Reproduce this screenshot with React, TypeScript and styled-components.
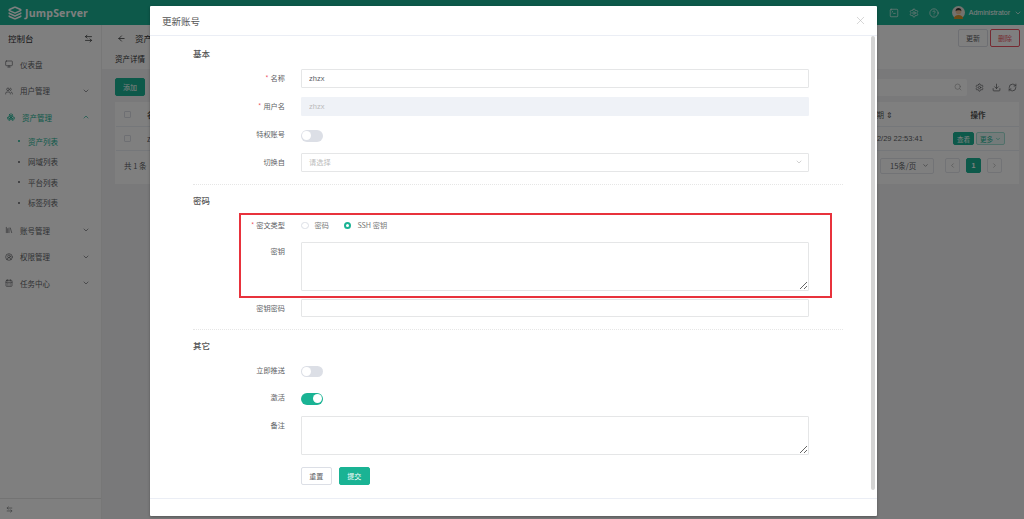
import React from 'react'
import styled, { createGlobalStyle } from 'styled-components'
import {
    ArrowLeft,
    ArrowLeftRight,
    Boxes,
    CalendarDays,
    ChevronDown,
    ChevronLeft,
    ChevronRight,
    ChevronUp,
    CircleHelp,
    CircleUserRound,
    Download,
    Layers,
    Library,
    Monitor,
    RefreshCw,
    Search,
    Settings,
    SquareTerminal,
    Users,
    X,
} from 'lucide-react'

const GlobalStyle = createGlobalStyle`
    html, body {
        margin: 0;
        padding: 0;
        height: 100%;
        overflow: hidden;
    }
    body {
        font-family: "Noto Sans CJK SC", "Noto Sans", sans-serif;
        color: #606266;
    }
    * { box-sizing: border-box; }
`

const Page = styled.div`
    position: relative;
    width: 1024px;
    height: 519px;
    overflow: hidden;
    display: flex;
    flex-direction: column;
    background: #f3f3f4;
`

const TopBar = styled.header`
    height: 25px;
    flex: none;
    background: #1ab394;
    display: flex;
    align-items: center;
    padding: 0 2px 0 8px;
    color: #fff;
`

const Logo = styled.div`
    display: flex;
    align-items: center;
    gap: 3px;
    font-family: "Open Sans", sans-serif;
    font-weight: 700;
    font-size: 10.5px;
    letter-spacing: 0.2px;
`

const TopActions = styled.div`
    margin-left: auto;
    display: flex;
    align-items: center;
    gap: 10px;
    font-family: "Liberation Sans", sans-serif;
    font-size: 7px;

    svg { flex: none; }
`

const User = styled.div`
    display: flex;
    align-items: center;
    gap: 4px;
    margin-left: 2.5px;
`

const Body = styled.div`
    flex: 1;
    display: flex;
    min-height: 0;
`

const Side = styled.aside`
    width: 102px;
    flex: none;
    background: #fff;
    border-right: 1px solid #eee;
    display: flex;
    flex-direction: column;
`

const SideHead = styled.div`
    height: 26px;
    display: flex;
    align-items: center;
    justify-content: space-between;
    padding: 0 8px;
    font-size: 8.5px;
    color: #303133;
`

const NavItem = styled.div<{ $active?: boolean }>`
    height: 26.6px;
    display: flex;
    align-items: center;
    gap: 7px;
    padding: 0 11px 0 ${p => (p.$active ? '7px' : '5px')};
    font-size: 7.5px;
    color: ${p => (p.$active ? '#1ab394' : '#606266')};

    span { flex: 1; }
`

const SubItem = styled.div<{ $active?: boolean }>`
    height: 20.5px;
    display: flex;
    align-items: center;
    gap: 8px;
    padding-left: 18px;
    font-size: 7.5px;
    color: ${p => (p.$active ? '#1ab394' : '#606266')};

    &::before {
        content: '';
        width: 2px;
        height: 2px;
        border-radius: 50%;
        background: currentColor;
    }
`

const SubList = styled.div`
    padding-bottom: 4px;
`

const SideFoot = styled.div`
    margin-top: auto;
    height: 21px;
    border-top: 1px solid #e7e7e7;
    display: flex;
    align-items: center;
    padding-left: 6px;
`

const Main = styled.main`
    flex: 1;
    min-width: 0;
    display: flex;
    flex-direction: column;
`

const PageHead = styled.div`
    background: #fff;
    height: 44px;
    flex: none;
`

const TitleRow = styled.div`
    height: 26px;
    display: flex;
    align-items: center;
    padding: 0 4px 0 15px;
    gap: 9px;
    font-size: 8.5px;
    color: #303133;
`

const HeadActions = styled.div`
    margin-left: auto;
    display: flex;
    gap: 2px;
`

const SmallButton = styled.button<{ $tone?: 'danger' | 'primary' | 'plain' | 'light' }>`
    height: 18px;
    min-width: 30px;
    padding: 0 5px;
    border-radius: 2px;
    font: 7px "Noto Sans CJK SC", sans-serif;
    white-space: nowrap;
    display: inline-flex;
    align-items: center;
    justify-content: center;
    gap: 2px;
    border: 1px solid
        ${p => (p.$tone === 'danger' ? '#ed5565' : p.$tone === 'primary' ? '#1ab394' : p.$tone === 'light' ? '#a3e1d4' : '#dcdfe6')};
    background: ${p => (p.$tone === 'primary' ? '#1ab394' : p.$tone === 'light' ? '#e8f7f4' : '#fff')};
    color: ${p => (p.$tone === 'danger' ? '#ed5565' : p.$tone === 'primary' ? '#fff' : p.$tone === 'light' ? '#1ab394' : '#606266')};
`

const Tabs = styled.div`
    height: 18px;
    line-height: 16px;
    padding-left: 13px;
    font-size: 7.5px;
    color: #303133;
`

const Content = styled.div`
    padding: 9px 5px 0 13px;
`

const Toolbar = styled.div`
    height: 18px;
    display: flex;
    align-items: center;
    padding-right: 2px;
    gap: 7.5px;
    color: #606266;
`

const SearchBox = styled.div`
    margin-left: auto;
    margin-right: 1px;
    width: 120px;
    height: 17px;
    background: #fff;
    border-radius: 2px;
    display: flex;
    align-items: center;
    justify-content: flex-end;
    padding-right: 5px;
    color: #aaa;
`

const Table = styled.div`
    margin-top: 6px;
    background: #fff;
    height: 82px;
    padding-left: 1px;
    display: flex;
    flex-direction: column;
    font-size: 7.5px;
`

const TableRow = styled.div<{ $head?: boolean }>`
    height: ${p => (p.$head ? '25px' : '24px')};
    display: flex;
    align-items: center;
    padding: 0 4px 0 8px;
    border-bottom: 1px solid #ebeef5;
    font-weight: ${p => (p.$head ? 600 : 400)};
    color: ${p => (p.$head ? '#555' : '#606266')};
`

const CheckBox = styled.span`
    width: 7px;
    height: 7px;
    border: 1px solid #dcdfe6;
    border-radius: 1px;
    margin-right: 16px;
`

const DateCell = styled.span`
    margin-left: auto;
    font-family: "Liberation Sans", "Noto Sans CJK SC", sans-serif;
    font-weight: 400;
    width: 99px;
`

const ActionCell = styled.span<{ $head?: boolean }>`
    width: 62px;
    display: flex;
    gap: 2px;
    justify-content: ${p => (p.$head ? 'center' : 'flex-start')};
    padding-right: ${p => (p.$head ? '12px' : '0')};

    ${SmallButton} {
        height: 13px;
        min-width: 19px;
        padding: 0 3px;
        font-size: 6.5px;
    }
`

const Pager = styled.div`
    flex: 1;
    display: flex;
    align-items: center;
    padding: 0 17px 4px 8px;
    gap: 6px;

    > span:first-child { margin-right: auto; }
`

const PageSize = styled.span`
    width: 54px;
    height: 16px;
    border: 1px solid #e4e7ed;
    border-radius: 2px;
    display: flex;
    align-items: center;
    justify-content: space-between;
    padding: 0 4px 0 9px;
    margin-right: 5px;
`

const PagerBtn = styled.span<{ $on?: boolean }>`
    width: 15px;
    height: 15px;
    border: 1px solid ${p => (p.$on ? '#1ab394' : '#e4e7ed')};
    background: ${p => (p.$on ? '#1ab394' : '#fff')};
    color: ${p => (p.$on ? '#fff' : '#999')};
    border-radius: 2px;
    display: flex;
    align-items: center;
    justify-content: center;
    font: 700 7px "Liberation Sans", sans-serif;
`

const Mask = styled.div`
    position: absolute;
    inset: 0;
    background: rgba(0, 0, 0, 0.5);
`

const Dialog = styled.div`
    position: absolute;
    left: 150px;
    top: 6px;
    width: 727px;
    height: 510px;
    background: #fff;
    border-radius: 1px;
    display: flex;
    flex-direction: column;
    box-shadow: 0 1px 3px rgba(0, 0, 0, 0.3);
`

const DialogHead = styled.div`
    height: 30px;
    flex: none;
    display: flex;
    align-items: center;
    justify-content: space-between;
    padding: 0 10.5px 0 12px;
    font-size: 9.5px;
    border-bottom: 1px solid #ebeef5;
    color: #555;
`

const DialogBody = styled.div`
    flex: 1;
    padding: 8px 34px 0 43px;
    min-height: 0;
`

const SectionTitle = styled.h3`
    margin: 0 0 7px;
    height: 18px;
    line-height: 18px;
    font-size: 8.5px;
    font-weight: 500;
    color: #555;
`

const Divider = styled.hr<{ $above: number }>`
    margin: ${p => p.$above}px 0 6px;
    border: 0;
    border-top: 1px dotted #e6e6e6;
`

const Row = styled.div`
    display: grid;
    grid-template-columns: 92px 508px;
    column-gap: 16px;
    align-items: start;
`

const Section = styled.section<{ $gap: number }>`
    ${Row} + ${Row} {
        margin-top: ${p => p.$gap}px;
    }
`

const Label = styled.label<{ $required?: boolean }>`
    height: 18.5px;
    display: flex;
    align-items: center;
    justify-content: flex-end;
    font-size: 7.2px;
    color: #606266;

    ${p =>
        p.$required &&
        `&::before {
            content: '*';
            color: #ed5565;
            margin-right: 2px;
        }`}
`

const Input = styled.input`
    display: block;
    width: 100%;
    height: 18.5px;
    padding: 0 7px;
    border: 1px solid #e5e6e7;
    border-radius: 1px;
    font: 7.5px "Liberation Sans", "Noto Sans CJK SC", sans-serif;
    color: #606266;
    background: #fff;
    outline: none;

    &:disabled {
        background: #eff2f7;
        border-color: #eff2f7;
        color: #bbb;
    }

    &::placeholder { color: #bbb; }
`

const SelectBox = styled.div`
    height: 18.5px;
    border: 1px solid #e5e6e7;
    border-radius: 1px;
    padding: 0 5px 0 7px;
    display: flex;
    align-items: center;
    justify-content: space-between;
    font-size: 7.2px;
    color: #bbb;
`

const TextArea = styled.textarea<{ $h: number }>`
    display: block;
    width: 100%;
    height: ${p => p.$h}px;
    border: 1px solid #e5e6e7;
    border-radius: 1px;
    outline: none;
    resize: vertical;
`

const Switch = styled.span<{ $on?: boolean }>`
    margin-top: 5px;
    display: block;
    position: relative;
    width: 22px;
    height: 11.5px;
    border-radius: 6px;
    background: ${p => (p.$on ? '#1ab394' : '#dcdfe6')};

    &::after {
        content: '';
        position: absolute;
        top: 1.2px;
        left: ${p => (p.$on ? '12px' : '1.2px')};
        width: 9px;
        height: 9px;
        border-radius: 50%;
        background: #fff;
    }
`

const RadioGroup = styled.div`
    height: 18.5px;
    display: flex;
    align-items: center;
    gap: 15px;
    font-size: 7.2px;
    color: #777;
`

const RadioItem = styled.span`
    display: flex;
    align-items: center;
    gap: 6px;
`

const RadioDot = styled.span<{ $on?: boolean }>`
    width: 7.5px;
    height: 7.5px;
    border-radius: 50%;
    border: ${p => (p.$on ? '2.5px solid #1ab394' : '1px solid #dcdfe6')};
    background: #fff;
`

const FormButtons = styled.div`
    grid-column: 2;
    margin-top: 3px;
    display: flex;
    gap: 7.5px;

    ${SmallButton} {
        width: 30.5px;
        min-width: 0;
        height: 18px;
    }
`

const DialogFoot = styled.div`
    height: 18px;
    flex: none;
    border-top: 1px solid #ebeef5;
`

const ScrollThumb = styled.div`
    position: absolute;
    right: 2px;
    top: 30px;
    width: 4px;
    height: 454px;
    background: #d4d4d4;
    border-radius: 2px;
`

const Callout = styled.div`
    position: absolute;
    left: 89px;
    top: 207px;
    width: 592.5px;
    height: 84.5px;
    border: 2px solid #e8323c;
    pointer-events: none;
`

const noop = () => undefined

const AvatarIcon = () => (
    <svg width="13" height="13" viewBox="0 0 13 13">
        <circle cx="6.5" cy="6.5" r="6.5" fill="#e9e4dc" />
        <path d="M2 13c0-3 2-4 4.500-4s4.500 1 4.500 4z" fill="#d9942b" />
        <circle cx="6.500" cy="5.500" r="2.800" fill="#eec39a" />
        <path d="M3.600 5.200C3.500 2.800 5 2 6.500 2s3 .8 2.900 3.200C8.500 4 5 4 3.600 5.200z" fill="#3b3230" />
    </svg>
)

export default function App() {
    return (
        <Page>
            <GlobalStyle />
            <TopBar>
                <Logo>
                    <Layers size={14} strokeWidth={2.6} />
                    JumpServer
                </Logo>
                <TopActions>
                    <SquareTerminal size={10} strokeWidth={1.5} />
                    <Settings size={10} strokeWidth={1.5} />
                    <CircleHelp size={10} strokeWidth={1.5} />
                    <User>
                        <AvatarIcon />
                        Administrator
                        <ChevronDown size={8} />
                    </User>
                </TopActions>
            </TopBar>
            <Body>
                <Side>
                    <SideHead>
                        控制台
                        <ArrowLeftRight size={9} />
                    </SideHead>
                    <NavItem>
                        <Monitor size={8} />
                        <span>仪表盘</span>
                    </NavItem>
                    <NavItem>
                        <Users size={8} />
                        <span>用户管理</span>
                        <ChevronDown size={8} />
                    </NavItem>
                    <NavItem $active>
                        <Boxes size={8} />
                        <span>资产管理</span>
                        <ChevronUp size={8} />
                    </NavItem>
                    <SubList>
                        <SubItem $active>资产列表</SubItem>
                        <SubItem>网域列表</SubItem>
                        <SubItem>平台列表</SubItem>
                        <SubItem>标签列表</SubItem>
                    </SubList>
                    <NavItem>
                        <Library size={8} />
                        <span>账号管理</span>
                        <ChevronDown size={8} />
                    </NavItem>
                    <NavItem>
                        <CircleUserRound size={8} />
                        <span>权限管理</span>
                        <ChevronDown size={8} />
                    </NavItem>
                    <NavItem>
                        <CalendarDays size={8} />
                        <span>任务中心</span>
                        <ChevronDown size={8} />
                    </NavItem>
                    <SideFoot>
                        <ArrowLeftRight size={7} />
                    </SideFoot>
                </Side>
                <Main>
                    <PageHead>
                        <TitleRow>
                            <ArrowLeft size={9} />
                            资产详情
                            <HeadActions>
                                <SmallButton>更新</SmallButton>
                                <SmallButton $tone="danger">删除</SmallButton>
                            </HeadActions>
                        </TitleRow>
                        <Tabs>资产详情</Tabs>
                    </PageHead>
                    <Content>
                        <Toolbar>
                            <SmallButton $tone="primary">添加</SmallButton>
                            <SearchBox>
                                <Search size={8} />
                            </SearchBox>
                            <Settings size={9} />
                            <Download size={9} />
                            <RefreshCw size={9} />
                        </Toolbar>
                        <Table>
                            <TableRow $head>
                                <CheckBox />
                                名称
                                <DateCell>创建日期 ⇕</DateCell>
                                <ActionCell $head>操作</ActionCell>
                            </TableRow>
                            <TableRow>
                                <CheckBox />
                                zhzx
                                <DateCell>2024/02/29 22:53:41</DateCell>
                                <ActionCell>
                                    <SmallButton $tone="primary">查看</SmallButton>
                                    <SmallButton $tone="light">
                                        更多
                                        <ChevronDown size={6} />
                                    </SmallButton>
                                </ActionCell>
                            </TableRow>
                            <Pager>
                                <span>共 1 条</span>
                                <PageSize>
                                    15条/页
                                    <ChevronDown size={7} />
                                </PageSize>
                                <PagerBtn>
                                    <ChevronLeft size={7} />
                                </PagerBtn>
                                <PagerBtn $on>1</PagerBtn>
                                <PagerBtn>
                                    <ChevronRight size={7} />
                                </PagerBtn>
                            </Pager>
                        </Table>
                    </Content>
                </Main>
            </Body>
            <Mask />
            <Dialog>
                <DialogHead>
                    更新账号
                    <X size={13} strokeWidth={1} color="#b5b5b5" />
                </DialogHead>
                <DialogBody>
                    <Section $gap={9.5}>
                        <SectionTitle>基本</SectionTitle>
                        <Row>
                            <Label $required>名称</Label>
                            <Input value="zhzx" onChange={noop} />
                        </Row>
                        <Row>
                            <Label $required>用户名</Label>
                            <Input value="zhzx" disabled />
                        </Row>
                        <Row>
                            <Label>特权账号</Label>
                            <Switch />
                        </Row>
                        <Row>
                            <Label>切换自</Label>
                            <SelectBox>
                                请选择
                                <ChevronDown size={8} />
                            </SelectBox>
                        </Row>
                    </Section>
                    <Divider $above={12.5} />
                    <Section $gap={7.5}>
                        <SectionTitle>密码</SectionTitle>
                        <Row>
                            <Label $required>密文类型</Label>
                            <RadioGroup>
                                <RadioItem>
                                    <RadioDot />
                                    密码
                                </RadioItem>
                                <RadioItem>
                                    <RadioDot $on />
                                    SSH 密钥
                                </RadioItem>
                            </RadioGroup>
                        </Row>
                        <Row>
                            <Label>密钥</Label>
                            <TextArea $h={49} />
                        </Row>
                        <Row>
                            <Label>密钥密码</Label>
                            <Input />
                        </Row>
                    </Section>
                    <Divider $above={11.5} />
                    <Section $gap={9}>
                        <SectionTitle>其它</SectionTitle>
                        <Row>
                            <Label>立即推送</Label>
                            <Switch />
                        </Row>
                        <Row>
                            <Label>激活</Label>
                            <Switch $on />
                        </Row>
                        <Row>
                            <Label>备注</Label>
                            <TextArea $h={39} />
                        </Row>
                        <Row>
                            <FormButtons>
                                <SmallButton>重置</SmallButton>
                                <SmallButton $tone="primary">提交</SmallButton>
                            </FormButtons>
                        </Row>
                    </Section>
                </DialogBody>
                <DialogFoot />
                <ScrollThumb />
                <Callout />
            </Dialog>
        </Page>
    )
}
